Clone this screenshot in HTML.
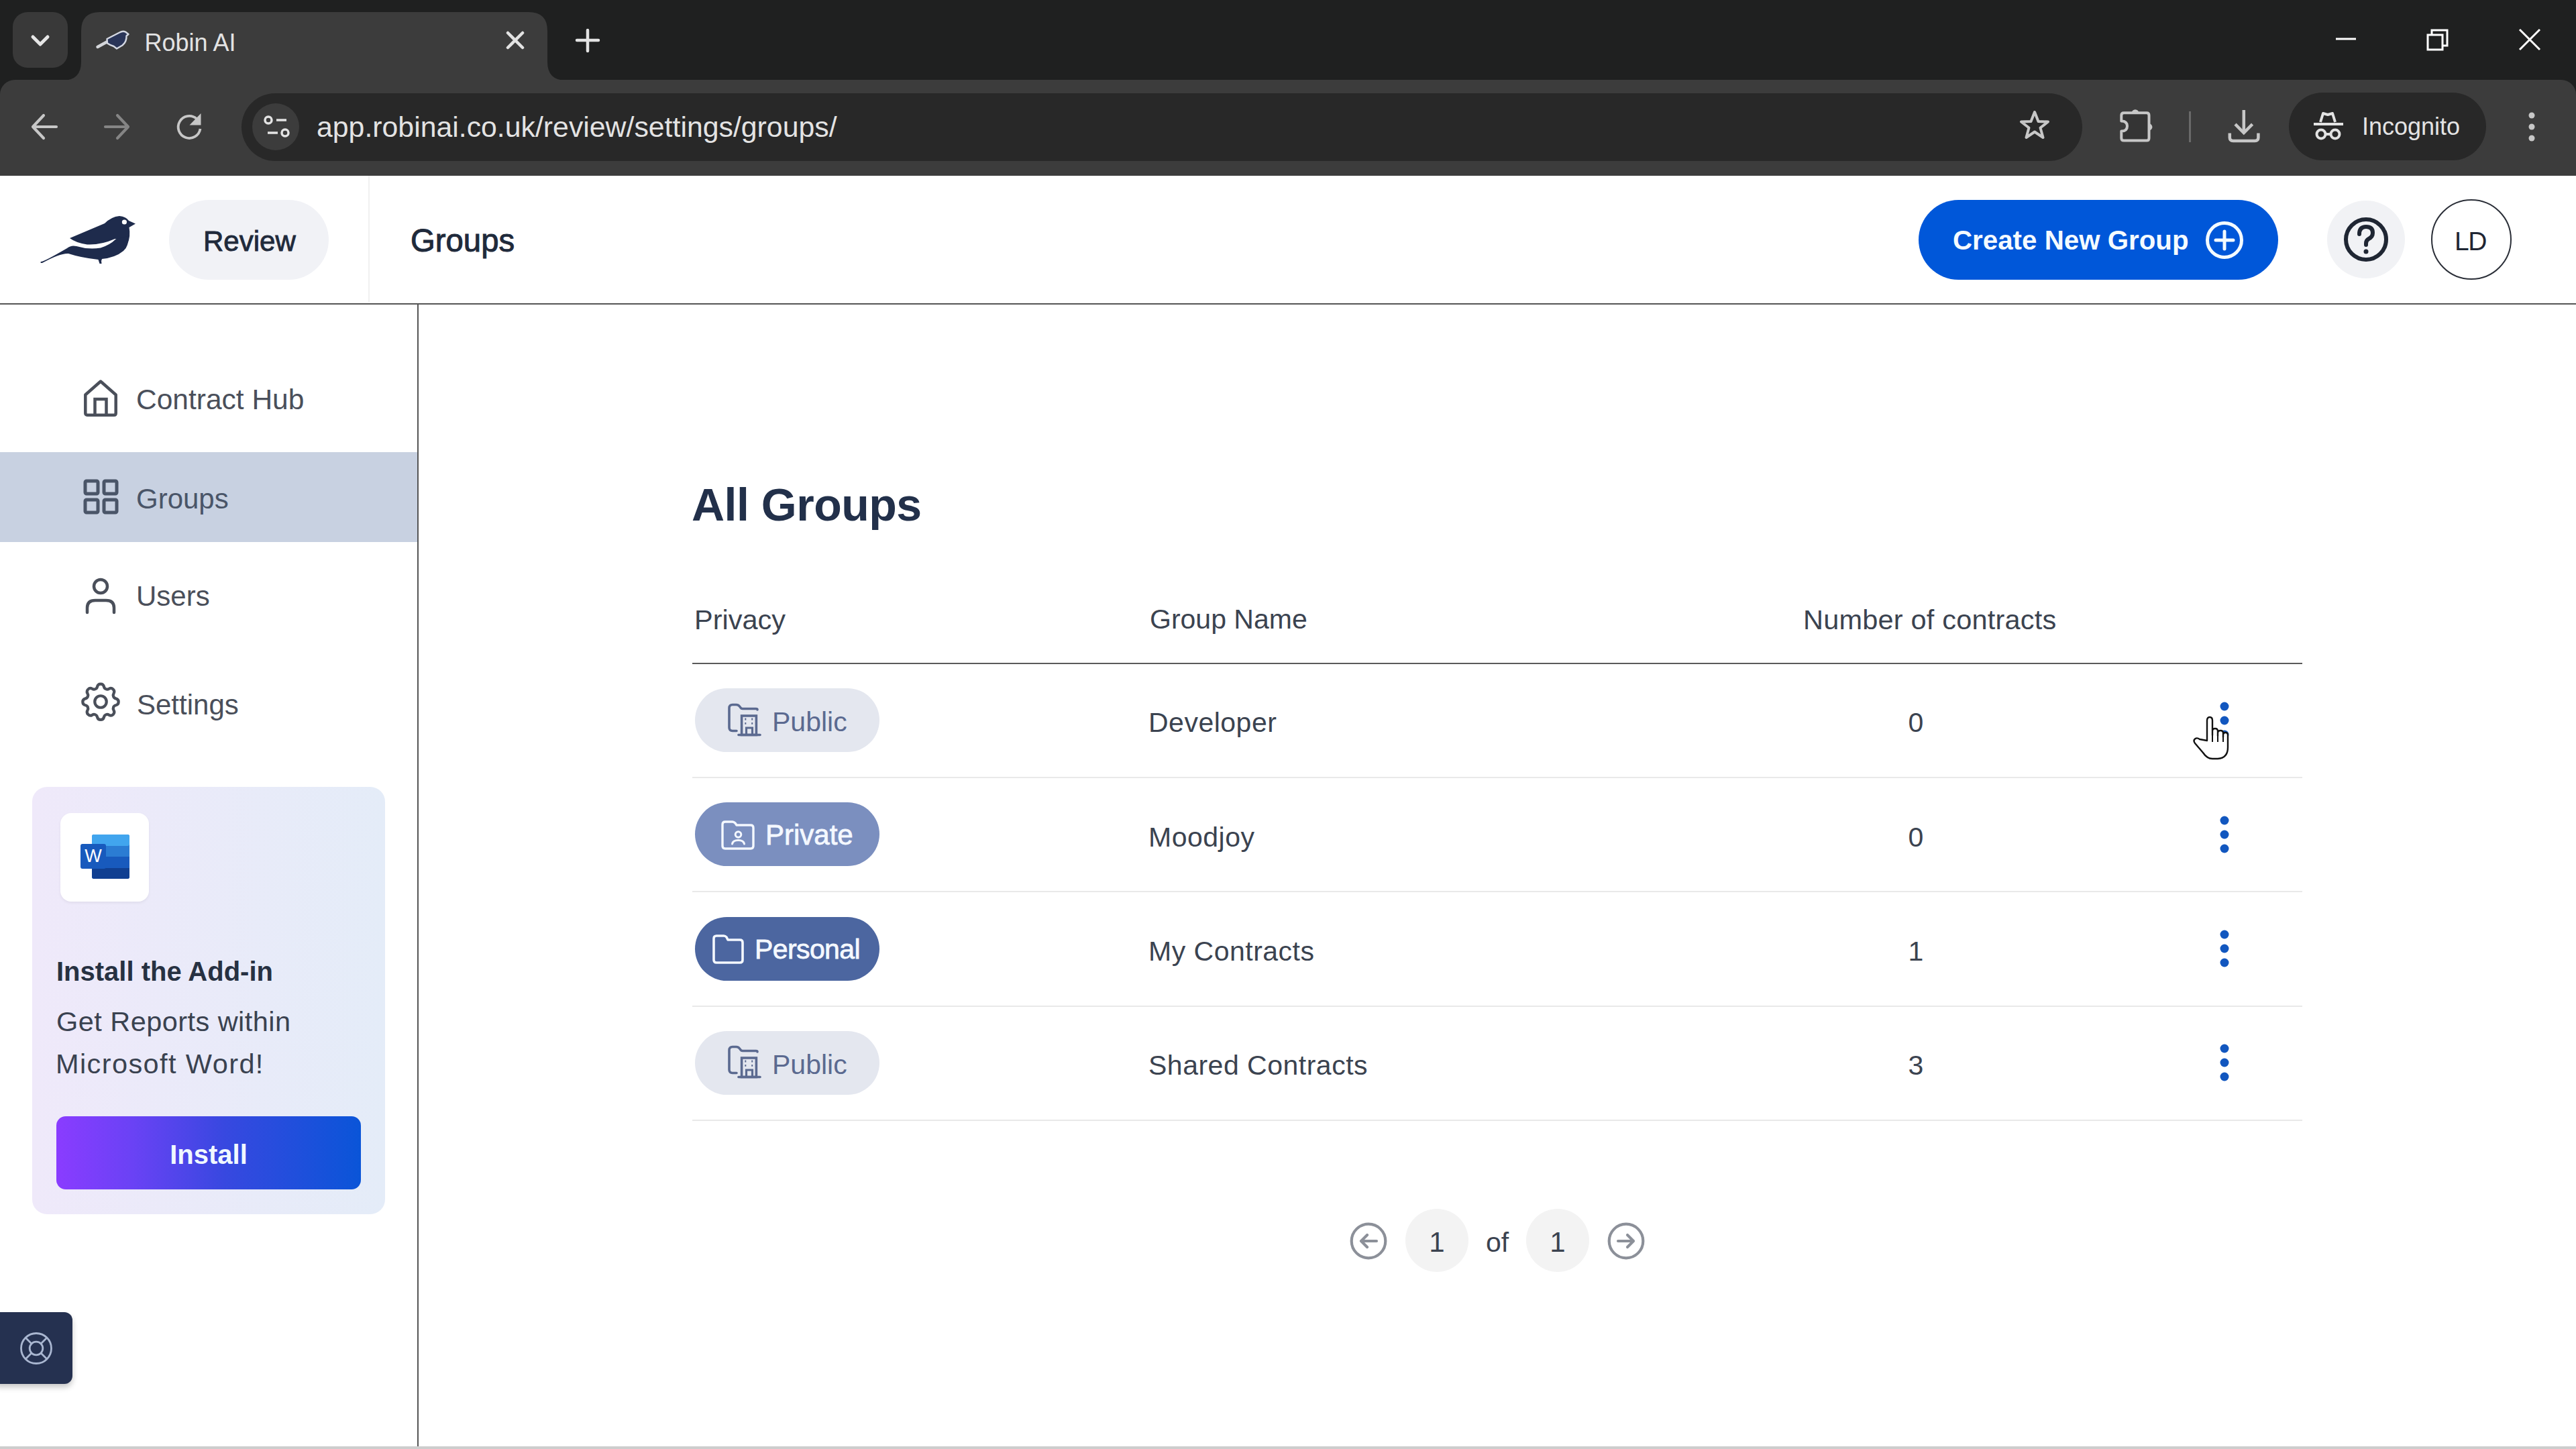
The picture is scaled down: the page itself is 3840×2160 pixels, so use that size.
<!DOCTYPE html>
<html><head><meta charset="utf-8">
<style>
*{margin:0;padding:0;box-sizing:border-box}
html,body{width:3840px;height:2160px;overflow:hidden;background:#fff;font-family:"Liberation Sans",sans-serif}
.a{position:absolute}
.t{position:absolute;white-space:nowrap;line-height:1}
svg{position:absolute;overflow:visible}
</style></head><body>

<!-- ===== Browser chrome ===== -->
<div class="a" style="left:0;top:0;width:3840px;height:262px;background:#1f2020"></div>
<!-- dropdown -->
<div class="a" style="left:19px;top:18px;width:82px;height:83px;border-radius:22px;background:#393939"></div>
<svg style="left:0;top:0" width="120" height="120"><path d="M49 55 L60 66 L71 55" fill="none" stroke="#e6e6e6" stroke-width="5" stroke-linecap="round" stroke-linejoin="round"/></svg>
<!-- tab -->
<svg style="left:0;top:0" width="900" height="125">
 <path d="M93 120 Q121 120 121 92 L121 46 Q121 18 149 18 L788 18 Q816 18 816 46 L816 92 Q816 120 844 120 Z" fill="#3c3c3c"/>
</svg>
<!-- favicon bird -->
<svg style="left:130px;top:30px" width="70" height="50" viewBox="130 30 70 50">
 <path d="M145.5 70 L161 61.5" stroke="#d4d6da" stroke-width="4.5" stroke-linecap="round"/>
 <path d="M159.5 58 L178 48.5 Q183 45.5 187 47.5 L191.5 51 L188.5 53.5 Q189 62 182.5 67.5 L174 72.5 L169.5 69 Q163.5 67 160 64.5 Z" fill="#2a3558" stroke="#d4d8e2" stroke-width="2.4" stroke-linejoin="round"/>
</svg>
<div class="t" style="left:215.5px;top:46px;font-size:36px;color:#e3e3e3">Robin AI</div>
<svg style="left:0;top:0" width="900" height="120">
 <path d="M757 49 L779 71 M779 49 L757 71" stroke="#e3e3e3" stroke-width="4.5" stroke-linecap="round"/>
 <path d="M876 45 L876 76 M860 60 L892 60" stroke="#e3e3e3" stroke-width="4.5" stroke-linecap="round"/>
</svg>
<!-- window controls -->
<svg style="left:3400px;top:0" width="440" height="120">
 <path d="M82 58 L112 58" stroke="#fff" stroke-width="3"/>
 <rect x="219" y="52" width="22" height="22" fill="none" stroke="#fff" stroke-width="3"/>
 <path d="M225 52 L225 45 L248 45 L248 68 L241 68" fill="none" stroke="#fff" stroke-width="3"/>
 <path d="M356 44 L386 74 M386 44 L356 74" stroke="#fff" stroke-width="3"/>
</svg>
<!-- toolbar -->
<div class="a" style="left:0;top:119px;width:3840px;height:143px;background:#3c3c3c;border-radius:22px 22px 0 0"></div>
<svg style="left:0;top:119px" width="340" height="143">
 <path d="M50 70 L84 70 M65 53 L49 70 L65 87" fill="none" stroke="#c7c7c7" stroke-width="4.2" stroke-linecap="round" stroke-linejoin="round"/>
 <path d="M157 70 L191 70 M175 53 L191 70 L175 87" fill="none" stroke="#858585" stroke-width="4.2" stroke-linecap="round" stroke-linejoin="round"/>
 <path d="M298.5 73 A16.5 16.5 0 1 1 293 58" fill="none" stroke="#c7c7c7" stroke-width="3.8"/>
 <path d="M299.5 50 L299.5 67.5 L282.5 67.5 Z" fill="#c7c7c7"/>
</svg>
<!-- omnibox -->
<div class="a" style="left:360px;top:139px;width:2744px;height:101px;border-radius:51px;background:#282828"></div>
<div class="a" style="left:376px;top:154px;width:70px;height:70px;border-radius:35px;background:#3c3c3c"></div>
<svg style="left:377.5px;top:153.5px" width="70" height="70">
 <circle cx="22" cy="25" r="5" fill="none" stroke="#e3e3e3" stroke-width="3.5"/>
 <path d="M34 25 L49 25" stroke="#e3e3e3" stroke-width="3.5"/>
 <circle cx="47" cy="44" r="5" fill="none" stroke="#e3e3e3" stroke-width="3.5"/>
 <path d="M21 44 L36 44" stroke="#e3e3e3" stroke-width="3.5"/>
</svg>
<div class="t" style="left:472px;top:168px;font-size:42.8px;color:#e3e3e3">app.robinai.co.uk/review/settings/groups/</div>
<!-- star -->
<svg style="left:3008px;top:162px" width="50" height="50" viewBox="0 0 50 50">
 <path d="M25 5 L30.5 19 L45 19.5 L33.5 28.5 L37.5 43 L25 34.5 L12.5 43 L16.5 28.5 L5 19.5 L19.5 19 Z" fill="none" stroke="#c7c7c7" stroke-width="4" stroke-linejoin="round"/>
</svg>
<!-- puzzle -->
<svg style="left:3150px;top:150px" width="70" height="70" viewBox="3150 150 70 70">
 <path d="M3166 168.3 L3200 168.3 Q3203.5 168.3 3203.5 172 L3203.5 206 Q3203.5 209.6 3200 209.6 L3166 209.6 Q3162.3 209.6 3162.3 206 L3162.3 195.5 Q3171 195.5 3171 188 Q3171 180.4 3162.3 180.4 L3162.3 172 Q3162.3 168.3 3166 168.3 Z" fill="#343434" stroke="#c7c7c7" stroke-width="4" stroke-linejoin="round"/>
 <path d="M3177.6 168.5 A5.4 5.4 0 0 1 3188.4 168.5 Z" fill="#c7c7c7"/>
 <path d="M3203.3 184.2 A5.1 5.1 0 0 1 3203.3 194.4 Z" fill="#c7c7c7"/>
</svg>
<div class="a" style="left:3263px;top:166px;width:3px;height:46px;background:#6a6a6a"></div>
<!-- download -->
<svg style="left:3310px;top:150px" width="70" height="70" viewBox="3310 150 70 70">
 <path d="M3344.8 164 L3344.8 197" stroke="#c7c7c7" stroke-width="4.5"/>
 <path d="M3332 185.2 L3344.8 198 L3357.6 185.2" fill="none" stroke="#c7c7c7" stroke-width="4.5"/>
 <path d="M3323.8 198.5 L3323.8 205 Q3323.8 210 3328.8 210 L3361.4 210 Q3366.4 210 3366.4 205 L3366.4 198.5" fill="none" stroke="#c7c7c7" stroke-width="4.5"/>
</svg>
<!-- incognito pill -->
<div class="a" style="left:3412px;top:138px;width:294px;height:101px;border-radius:51px;background:#282828"></div>
<svg style="left:3446px;top:164px" width="50" height="46" viewBox="0 0 50 46">
 <path d="M13 18 L17 5 L24 7 L31 5 L35 18" fill="none" stroke="#e3e3e3" stroke-width="4" stroke-linejoin="round"/>
 <path d="M3 21 L47 21" stroke="#e3e3e3" stroke-width="4"/>
 <circle cx="14" cy="36" r="6.5" fill="none" stroke="#e3e3e3" stroke-width="4"/>
 <circle cx="35" cy="36" r="6.5" fill="none" stroke="#e3e3e3" stroke-width="4"/>
 <path d="M20 36 L29 36" stroke="#e3e3e3" stroke-width="4"/>
</svg>
<div class="t" style="left:3521px;top:171px;font-size:36px;color:#e3e3e3">Incognito</div>
<svg style="left:3760px;top:160px" width="30" height="60">
 <circle cx="14" cy="12" r="4.5" fill="#c7c7c7"/><circle cx="14" cy="29" r="4.5" fill="#c7c7c7"/><circle cx="14" cy="46" r="4.5" fill="#c7c7c7"/>
</svg>

<!-- ===== App ===== -->
<!-- header -->
<svg style="left:50px;top:310px" width="160" height="90" viewBox="50 310 160 90">
 <path d="M104 355 L156 333 Q166 323 178 322 Q188 323 192 329 L202 333.5 L192.5 339 Q195 352 190 364 L171.5 356 Q150 365.5 130 364.5 Q113 362 104 355 Z" fill="#1e2b4c"/>
 <path d="M61 390 Q64 391 100 370 Q106 365 114 367 Q132 372.5 150 369.5 Q164 365 172 357 L190 352 Q193 366 184 374 Q172 384 152 386 L151 389 L151.5 393 L148.5 393 L146.5 387 Q120 384 102 378 Q90 377 63 392 Q59 392 61 390 Z" fill="#1e2b4c"/>
 <circle cx="185.4" cy="331" r="3.6" fill="#fff"/>
</svg>
<div class="a" style="left:252px;top:298px;width:238px;height:119px;border-radius:60px;background:#f1f2f6"></div>
<div class="t" style="left:303px;top:338.5px;font-size:42px;-webkit-text-stroke:0.9px #1f2a3b;color:#1f2a3b">Review</div>
<div class="a" style="left:549px;top:262px;width:2px;height:188px;background:#f0f0f0"></div>
<div class="t" style="left:612px;top:335px;font-size:47.3px;-webkit-text-stroke:1px #1f2a3b;color:#1f2a3b">Groups</div>
<!-- create button -->
<div class="a" style="left:2860px;top:298px;width:536px;height:119px;border-radius:60px;background:#0057d9"></div>
<div class="t" style="left:2911px;top:339px;font-size:40.3px;font-weight:bold;color:#f4fbff">Create New Group</div>
<svg style="left:3288px;top:330px" width="56" height="56">
 <circle cx="28" cy="28" r="25.5" fill="none" stroke="#f4fbff" stroke-width="5"/>
 <path d="M28 15 L28 41 M15 28 L41 28" stroke="#f4fbff" stroke-width="5" stroke-linecap="round"/>
</svg>
<!-- help -->
<div class="a" style="left:3469px;top:299px;width:116px;height:116px;border-radius:58px;background:#f1f2f5"></div>
<svg style="left:3469px;top:299px" width="116" height="116">
 <circle cx="58" cy="58" r="30" fill="none" stroke="#1f2633" stroke-width="6"/>
 <path d="M48 50 Q48 39 58 39 Q68 39 68 48 Q68 54 62 57 Q58 59 58 64 L58 66" fill="none" stroke="#1f2633" stroke-width="6" stroke-linecap="round"/>
 <circle cx="58" cy="76" r="3.5" fill="#1f2633"/>
</svg>
<!-- avatar -->
<div class="a" style="left:3624px;top:297px;width:120px;height:120px;border-radius:60px;border:2px solid #2b2f38;background:#fff"></div>
<div class="t" style="left:3659px;top:340px;font-size:39px;letter-spacing:-1.5px;color:#1f2633">LD</div>
<!-- header border -->
<div class="a" style="left:0;top:452px;width:3840px;height:2px;background:#555"></div>
<div class="a" style="left:622px;top:452px;width:2px;height:1708px;background:#555"></div>

<!-- sidebar -->
<div class="a" style="left:0;top:674px;width:622px;height:134px;background:#c8d1e1"></div>
<svg style="left:120px;top:560px" width="60" height="66" viewBox="0 0 60 66">
 <path d="M30 8.5 L52.7 28.5 L52.7 56 Q52.7 58.7 50 58.7 L10 58.7 Q7.3 58.7 7.3 56 L7.3 28.5 Z" fill="none" stroke="#4a4f5a" stroke-width="4.5" stroke-linejoin="round"/>
 <path d="M21.5 58.7 L21.5 35 L38.5 35 L38.5 58.7" fill="none" stroke="#4a4f5a" stroke-width="4.5"/>
</svg>
<div class="t" style="left:203px;top:575px;font-size:42.5px;color:#4a4f5a">Contract Hub</div>
<svg style="left:120px;top:710px" width="60" height="60" viewBox="0 0 60 60">
 <rect x="7" y="7" width="19" height="19" rx="2" fill="none" stroke="#4a5568" stroke-width="5"/>
 <rect x="35" y="7" width="19" height="19" rx="2" fill="none" stroke="#4a5568" stroke-width="5"/>
 <rect x="7" y="35" width="19" height="19" rx="2" fill="none" stroke="#4a5568" stroke-width="5"/>
 <rect x="35" y="35" width="19" height="19" rx="2" fill="none" stroke="#4a5568" stroke-width="5"/>
</svg>
<div class="t" style="left:203px;top:723px;font-size:42px;color:#4a5568">Groups</div>
<svg style="left:120px;top:858px" width="60" height="60" viewBox="0 0 60 60">
 <circle cx="30" cy="16" r="10" fill="none" stroke="#4a4f5a" stroke-width="4.5"/>
 <path d="M10 55 L10 48 Q10 37 22 37 L38 37 Q50 37 50 48 L50 55" fill="none" stroke="#4a4f5a" stroke-width="4.5" stroke-linecap="round"/>
</svg>
<div class="t" style="left:203px;top:868px;font-size:42px;color:#4a4f5a">Users</div>
<svg style="left:115px;top:1010.5px" width="70" height="70" viewBox="0 0 24 24">
 <path d="M10.3 4.3c.4-1.8 3-1.8 3.4 0a1.7 1.7 0 0 0 2.6 1.1c1.5-.9 3.3.8 2.4 2.4a1.7 1.7 0 0 0 1.1 2.6c1.8.4 1.8 3 0 3.4a1.7 1.7 0 0 0-1.1 2.6c.9 1.5-.8 3.3-2.4 2.4a1.7 1.7 0 0 0-2.6 1.1c-.4 1.8-3 1.8-3.4 0a1.7 1.7 0 0 0-2.6-1.1c-1.5.9-3.3-.8-2.4-2.4a1.7 1.7 0 0 0-1.1-2.6c-1.8-.4-1.8-3 0-3.4a1.7 1.7 0 0 0 1.1-2.6c-.9-1.5.8-3.3 2.4-2.4a1.7 1.7 0 0 0 2.6-1.1z" fill="none" stroke="#4a4f5a" stroke-width="1.45" stroke-linejoin="round"/>
 <circle cx="12" cy="12" r="3" fill="none" stroke="#4a4f5a" stroke-width="1.45"/>
</svg>
<div class="t" style="left:204px;top:1030px;font-size:42px;color:#4a4f5a">Settings</div>

<!-- add-in card -->
<div class="a" style="left:48px;top:1173px;width:526px;height:637px;border-radius:22px;background:linear-gradient(90deg,#efe9fa,#e4ecf8)"></div>
<div class="a" style="left:90px;top:1212px;width:132px;height:132px;border-radius:16px;background:#fff;box-shadow:0 2px 4px rgba(0,0,0,0.06)"></div>
<svg style="left:118px;top:1242px" width="80" height="72" viewBox="0 0 80 72">
 <rect x="19" y="2" width="56" height="66" rx="3" fill="#2b7cd3"/>
 <rect x="19" y="2" width="56" height="17" rx="3" fill="#41a5ee"/>
 <rect x="19" y="19" width="56" height="16" fill="#2b7cd3"/>
 <rect x="19" y="35" width="56" height="17" fill="#185abd"/>
 <path d="M19 52 L75 52 L75 65 Q75 68 72 68 L22 68 Q19 68 19 65 Z" fill="#103f91"/>
 <rect x="2" y="16" width="38" height="37" rx="3" fill="#185abd"/>
 <text x="21" y="43" font-family="Liberation Sans" font-size="27" fill="#fff" text-anchor="middle">W</text>
</svg>
<div class="t" style="left:84px;top:1428px;font-size:40px;font-weight:bold;color:#273142">Install the Add-in</div>
<div class="t" style="left:84px;top:1502px;font-size:41.5px;letter-spacing:0.45px;color:#3a4250">Get Reports within</div>
<div class="t" style="left:83px;top:1565px;font-size:41.5px;letter-spacing:1.4px;color:#3a4250">Microsoft Word!</div>
<div class="a" style="left:84px;top:1664px;width:454px;height:109px;border-radius:14px;background:linear-gradient(90deg,#8a3cff 0%,#6a42f5 25%,#3848e0 55%,#0a55d8 100%)"></div>
<div class="t" style="left:84px;top:1701px;width:454px;text-align:center;font-size:40px;font-weight:bold;color:#f0f8ff">Install</div>

<!-- help float -->
<div class="a" style="left:-12px;top:1956px;width:120px;height:107px;border-radius:12px;background:#253150;box-shadow:0 5px 8px rgba(0,0,0,0.22)"></div>
<svg style="left:23.6px;top:1980px" width="60" height="60" viewBox="0 0 60 60">
 <circle cx="30" cy="30" r="22.5" fill="none" stroke="#a9b6d0" stroke-width="2.8"/>
 <circle cx="30" cy="30" r="9.8" fill="none" stroke="#a9b6d0" stroke-width="2.8"/>
 <path d="M14 14 L23 23 M46 14 L37 23 M14 46 L23 37 M46 46 L37 37" stroke="#a9b6d0" stroke-width="2.8"/>
</svg>

<!-- main -->
<div class="t" style="left:1031px;top:718px;font-size:68px;font-weight:bold;color:#22304a;letter-spacing:-0.5px">All Groups</div>
<div class="t" style="left:1035px;top:902.5px;font-size:41.5px;color:#3b4350">Privacy</div>
<div class="t" style="left:1714px;top:903px;font-size:41px;color:#3b4350">Group Name</div>
<div class="t" style="left:2688px;top:903px;font-size:41.5px;letter-spacing:0.2px;color:#3b4350">Number of contracts</div>
<div class="a" style="left:1032px;top:988px;width:2400px;height:2px;background:#5a5a5a"></div>
<div class="a" style="left:1036px;top:1026.0px;width:275px;height:95px;border-radius:48px;background:#e4e7ef"></div>
<svg style="left:1083px;top:1048px" width="52" height="52" viewBox="0 0 52 52">
 <path d="M15 41.5 L9 41.5 Q4 41.5 4 36.5 L4 7.5 Q4 2.5 9 2.5 L14.5 2.5 Q17.5 2.5 19.5 5 L21 7 Q22 8.5 24 8.5 L44 8.5 Q46 8.5 46 10" fill="none" stroke="#5b6a90" stroke-width="3.6" stroke-linecap="round" stroke-linejoin="round"/>
 <rect x="22.6" y="19" width="21.8" height="28.5" fill="none" stroke="#5b6a90" stroke-width="3.6"/>
 <path d="M18 47.5 L50 47.5" stroke="#5b6a90" stroke-width="3.6" stroke-linecap="round"/>
 <path d="M27.3 24 L29.3 24 M37.2 24 L39.2 24 M27.3 30.3 L29.3 30.3 M37.2 30.3 L39.2 30.3" stroke="#5b6a90" stroke-width="2.8"/>
 <path d="M29.5 47 L29.5 37 L38.5 37 L38.5 47" fill="none" stroke="#5b6a90" stroke-width="3.2"/>
</svg>
<div class="t" style="left:1151px;top:1056.3px;font-size:41px;color:#5b6a90">Public</div>
<div class="t" style="left:1712px;top:1057.3px;font-size:41px;letter-spacing:0.5px;color:#3b4350">Developer</div>
<div class="t" style="left:2796px;width:120px;text-align:center;top:1057.3px;font-size:41px;color:#3b4350">0</div>
<svg style="left:3300px;top:1033.5px" width="32" height="80"><circle cx="16" cy="19" r="6.5" fill="#1257bf"/><circle cx="16" cy="40" r="6.5" fill="#1257bf"/><circle cx="16" cy="61" r="6.5" fill="#1257bf"/></svg>
<div class="a" style="left:1032px;top:1158.0px;width:2400px;height:2px;background:#e9e9e9"></div>
<div class="a" style="left:1036px;top:1196.3px;width:275px;height:95px;border-radius:48px;background:#7b8fbf"></div>
<svg style="left:1075px;top:1221px" width="52" height="46" viewBox="0 0 52 46">
 <path d="M6 4 L17 4 Q19 4 21 6 L23 9 L44 9 Q48 9 48 13 L48 40 Q48 44 44 44 L6 44 Q2 44 2 40 L2 8 Q2 4 6 4 Z" fill="none" stroke="#f4f8ff" stroke-width="3.4" stroke-linejoin="round"/>
 <circle cx="25.5" cy="23" r="4.3" fill="none" stroke="#f4f8ff" stroke-width="3"/>
 <path d="M16.5 37 Q17.5 31.5 25.5 31.5 Q33.5 31.5 34.5 37" fill="none" stroke="#f4f8ff" stroke-width="3" stroke-linecap="round"/>
</svg>
<div class="t" style="left:1141px;top:1224px;font-size:42px;-webkit-text-stroke:0.8px #f4f8ff;color:#f4f8ff">Private</div>
<div class="t" style="left:1712px;top:1227.5px;font-size:41px;letter-spacing:0.5px;color:#3b4350">Moodjoy</div>
<div class="t" style="left:2796px;width:120px;text-align:center;top:1227.5px;font-size:41px;color:#3b4350">0</div>
<svg style="left:3300px;top:1203.8px" width="32" height="80"><circle cx="16" cy="19" r="6.5" fill="#1257bf"/><circle cx="16" cy="40" r="6.5" fill="#1257bf"/><circle cx="16" cy="61" r="6.5" fill="#1257bf"/></svg>
<div class="a" style="left:1032px;top:1328.3px;width:2400px;height:2px;background:#e9e9e9"></div>
<div class="a" style="left:1036px;top:1366.6px;width:275px;height:95px;border-radius:48px;background:#4c66a0"></div>
<svg style="left:1062px;top:1391px" width="50" height="46" viewBox="0 0 50 46">
 <path d="M6 4 L17 4 Q19 4 21 6 L23 10 L41 10 Q45 10 45 14 L45 40 Q45 44 41 44 L6 44 Q2 44 2 40 L2 8 Q2 4 6 4 Z" fill="none" stroke="#f4f8ff" stroke-width="3.6" stroke-linejoin="round"/>
</svg>
<div class="t" style="left:1125px;top:1394.5px;font-size:41px;letter-spacing:-0.6px;-webkit-text-stroke:0.8px #f4f8ff;color:#f4f8ff">Personal</div>
<div class="t" style="left:1712px;top:1397.7px;font-size:41px;letter-spacing:0.5px;color:#3b4350">My Contracts</div>
<div class="t" style="left:2796px;width:120px;text-align:center;top:1397.7px;font-size:41px;color:#3b4350">1</div>
<svg style="left:3300px;top:1374.1px" width="32" height="80"><circle cx="16" cy="19" r="6.5" fill="#1257bf"/><circle cx="16" cy="40" r="6.5" fill="#1257bf"/><circle cx="16" cy="61" r="6.5" fill="#1257bf"/></svg>
<div class="a" style="left:1032px;top:1498.6px;width:2400px;height:2px;background:#e9e9e9"></div>
<div class="a" style="left:1036px;top:1536.9px;width:275px;height:95px;border-radius:48px;background:#e4e7ef"></div>
<svg style="left:1083px;top:1558px" width="52" height="52" viewBox="0 0 52 52">
 <path d="M15 41.5 L9 41.5 Q4 41.5 4 36.5 L4 7.5 Q4 2.5 9 2.5 L14.5 2.5 Q17.5 2.5 19.5 5 L21 7 Q22 8.5 24 8.5 L44 8.5 Q46 8.5 46 10" fill="none" stroke="#5b6a90" stroke-width="3.6" stroke-linecap="round" stroke-linejoin="round"/>
 <rect x="22.6" y="19" width="21.8" height="28.5" fill="none" stroke="#5b6a90" stroke-width="3.6"/>
 <path d="M18 47.5 L50 47.5" stroke="#5b6a90" stroke-width="3.6" stroke-linecap="round"/>
 <path d="M27.3 24 L29.3 24 M37.2 24 L39.2 24 M27.3 30.3 L29.3 30.3 M37.2 30.3 L39.2 30.3" stroke="#5b6a90" stroke-width="2.8"/>
 <path d="M29.5 47 L29.5 37 L38.5 37 L38.5 47" fill="none" stroke="#5b6a90" stroke-width="3.2"/>
</svg>
<div class="t" style="left:1151px;top:1566.9px;font-size:41px;color:#5b6a90">Public</div>
<div class="t" style="left:1712px;top:1567.9px;font-size:41px;letter-spacing:0.5px;color:#3b4350">Shared Contracts</div>
<div class="t" style="left:2796px;width:120px;text-align:center;top:1567.9px;font-size:41px;color:#3b4350">3</div>
<svg style="left:3300px;top:1544.4px" width="32" height="80"><circle cx="16" cy="19" r="6.5" fill="#1257bf"/><circle cx="16" cy="40" r="6.5" fill="#1257bf"/><circle cx="16" cy="61" r="6.5" fill="#1257bf"/></svg>
<div class="a" style="left:1032px;top:1668.9px;width:2400px;height:2px;background:#e9e9e9"></div>
<svg style="left:3262px;top:1064px" width="70" height="72" viewBox="0 0 70 72">
 <path d="M28 40 L28 10 Q28 5 32 5 Q36 5 36 10 L36 32 L36 26 Q36 22 40 22 Q44 22 44 26 L44 33 L44 29 Q44 25 48 25 Q52 25 52 29 L52 35 L52 32 Q52 28 55.5 28 Q59 28 59 32 L59 50 Q59 66 44 67 L36 67 Q28 67 22 58 L10 44 Q7 40 10 37.5 Q13 35 17 38 Z" fill="#fff" stroke="#111" stroke-width="2.4" stroke-linejoin="round"/>
 <path d="M36 32 L36 42 M44 33 L44 42 M52 35 L52 42" stroke="#111" stroke-width="2"/>
</svg>
<svg style="left:2000px;top:1810px" width="80" height="80">
 <circle cx="40" cy="40" r="25.3" fill="none" stroke="#8c9099" stroke-width="4.2"/>
 <path d="M52 40 L29 40 M38 31 L29 40 L38 49" fill="none" stroke="#8c9099" stroke-width="4.2" stroke-linejoin="round" stroke-linecap="round"/>
</svg>
<div class="a" style="left:2095px;top:1802px;width:94px;height:94px;border-radius:47px;background:#f3f3f3"></div>
<div class="t" style="left:2095px;width:94px;text-align:center;top:1831px;font-size:42px;color:#3b4350">1</div>
<div class="t" style="left:2182px;width:100px;text-align:center;top:1832px;font-size:41px;color:#3b4350">of</div>
<div class="a" style="left:2275px;top:1802px;width:94px;height:94px;border-radius:47px;background:#f3f3f3"></div>
<div class="t" style="left:2275px;width:94px;text-align:center;top:1831px;font-size:42px;color:#3b4350">1</div>
<svg style="left:2384px;top:1810px" width="80" height="80">
 <circle cx="40" cy="40" r="25.3" fill="none" stroke="#8c9099" stroke-width="4.2"/>
 <path d="M28 40 L51 40 M42 31 L51 40 L42 49" fill="none" stroke="#8c9099" stroke-width="4.2" stroke-linejoin="round" stroke-linecap="round"/>
</svg>
<div class="a" style="left:0;top:2156px;width:3840px;height:4px;background:#cdcdcd"></div>


</body></html>
